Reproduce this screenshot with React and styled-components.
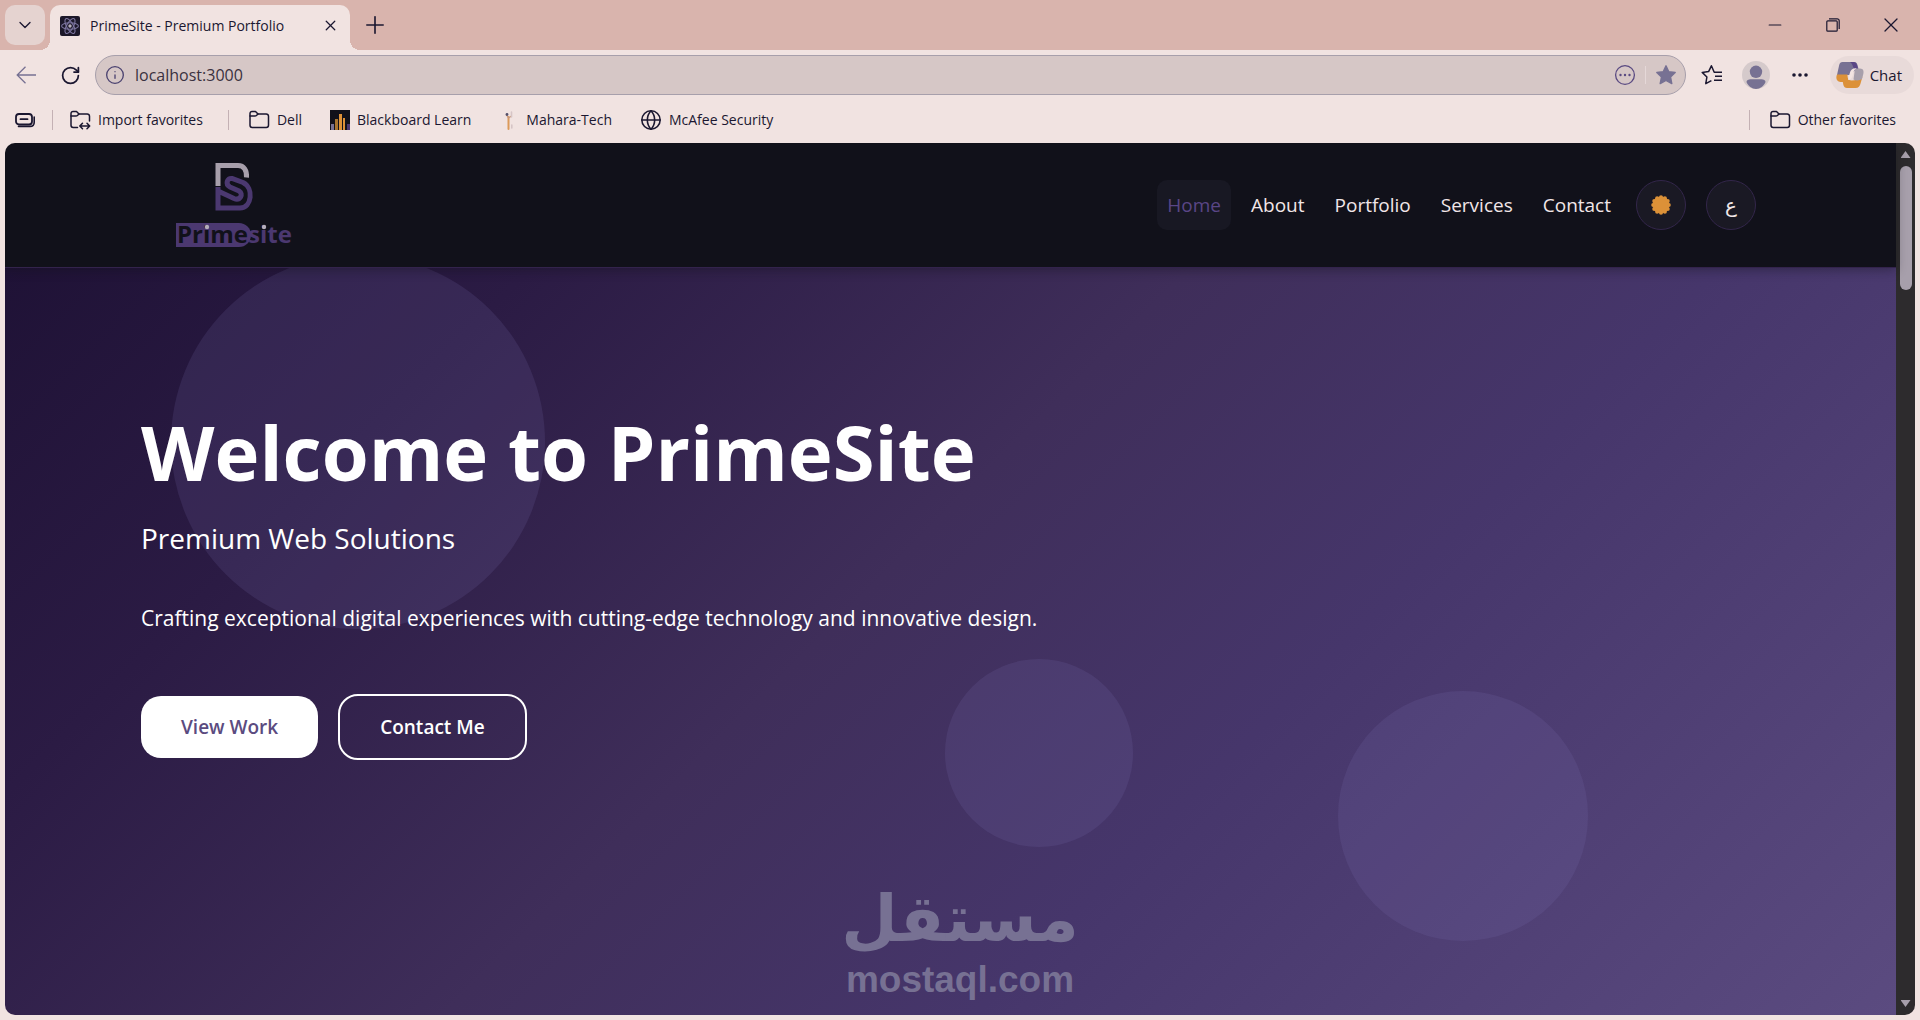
import { useState } from "react";
import styled, { createGlobalStyle } from "styled-components";
import {
  ArrowLeft,
  ChevronDown,
  Globe,
  Info,
  Minus,
  Plus,
  RotateCw,
  X,
} from "lucide-react";

const navItems = ["Home", "About", "Portfolio", "Services", "Contact"];

export default function App() {
  const [active, setActive] = useState("Home");

  return (
    <Window>
      <GlobalStyle />
      <TabStrip>
        <TabMenuButton aria-label="Tab actions">
          <ChevronDown size={20} strokeWidth={1.6} />
        </TabMenuButton>
        <Tab>
          <ReactIcon />
          <TabTitle>PrimeSite - Premium Portfolio</TabTitle>
          <IconButton aria-label="Close tab" $size={20}>
            <X size={17} strokeWidth={1.8} />
          </IconButton>
        </Tab>
        <IconButton aria-label="New tab" $size={50}>
          <Plus size={28} strokeWidth={1.4} />
        </IconButton>
        <WindowControls>
          <ControlButton aria-label="Minimize">
            <Minus size={20} strokeWidth={1.4} />
          </ControlButton>
          <ControlButton aria-label="Restore">
            <RestoreIcon />
          </ControlButton>
          <ControlButton aria-label="Close">
            <X size={24} strokeWidth={1.3} />
          </ControlButton>
        </WindowControls>
      </TabStrip>

      <Toolbar>
        <IconButton aria-label="Back" $size={45} $muted>
          <BackIcon />
        </IconButton>
        <IconButton aria-label="Refresh" $size={45}>
          <RotateCw size={21} strokeWidth={2} />
        </IconButton>
        <AddressBar>
          <Info size={20} strokeWidth={1.6} />
          <AddressInput aria-label="Address" defaultValue="localhost:3000" />
          <IconButton aria-label="Page options" $size={24}>
            <MoreCircleIcon />
          </IconButton>
          <AddressDivider />
          <IconButton aria-label="Remove from favorites" $size={24}>
            <StarIcon />
          </IconButton>
        </AddressBar>
        <ToolbarActions>
          <IconButton aria-label="Favorites" $size={24}>
            <StarListIcon />
          </IconButton>
          <IconButton aria-label="Profile" $size={28}>
            <AvatarIcon />
          </IconButton>
          <IconButton aria-label="Settings and more" $size={24}>
            <DotsIcon />
          </IconButton>
          <ChatButton>
            <CopilotIcon />
            Chat
          </ChatButton>
        </ToolbarActions>
      </Toolbar>

      <FavoritesBar>
        <IconButton aria-label="Workspaces" $size={20}>
          <WorkspacesIcon />
        </IconButton>
        <Divider />
        <Favorite href="#import">
          <FolderIcon arrows />
          Import favorites
        </Favorite>
        <FavoriteList>
          <Divider />
          <Favorite href="#dell">
            <FolderIcon />
            Dell
          </Favorite>
        </FavoriteList>
        <FavoriteLinks>
          <Favorite href="#blackboard">
            <BlackboardIcon />
            Blackboard Learn
          </Favorite>
          <Favorite href="#mahara">
            <MaharaIcon />
            Mahara-Tech
          </Favorite>
          <Favorite href="#mcafee">
            <Globe size={22} strokeWidth={1.7} />
            McAfee Security
          </Favorite>
        </FavoriteLinks>
        <OtherFavorites>
          <Divider />
          <Favorite href="#other">
            <FolderIcon />
            Other favorites
          </Favorite>
        </OtherFavorites>
      </FavoritesBar>

      <Viewport>
        <Page>
          <Header>
            <LogoLink href="#home" aria-label="Primesite">
              <Logo />
            </LogoLink>
            <Nav>
              <NavList>
                {navItems.map((item) => (
                  <NavLink
                    key={item}
                    href={`#${item.toLowerCase()}`}
                    $active={item === active}
                    onClick={() => setActive(item)}
                  >
                    {item}
                  </NavLink>
                ))}
              </NavList>
              <NavTools>
                <RoundButton aria-label="Toggle theme">
                  <SunIcon />
                </RoundButton>
                <RoundButton lang="ar">ع</RoundButton>
              </NavTools>
            </Nav>
          </Header>

          <Hero>
            <Bubble $size={374} $left="8.8%" $top={-13} />
            <Bubble $size={188} $left="49.7%" $top={391} />
            <Bubble $size={250} $left="70.5%" $top={423} />
            <HeroContent>
              <Title>Welcome to PrimeSite</Title>
              <Subtitle>Premium Web Solutions</Subtitle>
              <Description>
                Crafting exceptional digital experiences with cutting-edge
                technology and innovative design.
              </Description>
              <Actions>
                <PrimaryButton>View Work</PrimaryButton>
                <OutlineButton>Contact Me</OutlineButton>
              </Actions>
            </HeroContent>
          </Hero>
        </Page>
        <Scrollbar>
          <ScrollArrow />
          <ScrollThumb />
          <ScrollArrow $down />
        </Scrollbar>
        <Watermark>
          <WatermarkArabic lang="ar" dir="rtl">مستقل</WatermarkArabic>
          <WatermarkLatin>mostaql.com</WatermarkLatin>
        </Watermark>
      </Viewport>
    </Window>
  );
}

function ReactIcon() {
  return (
    <svg width="20" height="20" viewBox="0 0 20 20" fill="none">
      <rect width="20" height="20" rx="2" fill="#1c1829" />
      <g stroke="#7d76a0" strokeWidth="1.1">
        <ellipse cx="10" cy="10" rx="8.4" ry="3.3" />
        <ellipse cx="10" cy="10" rx="8.4" ry="3.3" transform="rotate(60 10 10)" />
        <ellipse cx="10" cy="10" rx="8.4" ry="3.3" transform="rotate(120 10 10)" />
      </g>
      <circle cx="10" cy="10" r="1.7" fill="#b5aebb" />
    </svg>
  );
}

function RestoreIcon() {
  return (
    <svg width="14" height="14" viewBox="0 0 14 14" fill="none" stroke="currentColor" strokeWidth="1.2">
      <rect x="0.8" y="2.8" width="10.4" height="10.4" rx="1" />
      <path d="M3 0.8h8.2a2 2 0 0 1 2 2V11" />
    </svg>
  );
}

function BackIcon() {
  return (
    <svg width="20" height="18" viewBox="0 0 20 18" fill="none" stroke="currentColor" strokeWidth="1.3">
      <path d="M9.500 0.800L1.200 9l8.300 8.200M1.200 9H20" />
    </svg>
  );
}

function MoreCircleIcon() {
  return (
    <svg width="22" height="22" viewBox="0 0 22 22" fill="none">
      <circle cx="11" cy="11" r="9.4" stroke="#5a4a82" strokeWidth="1.3" />
      <g fill="#5a4a82">
        <circle cx="6.5" cy="11" r="1.2" />
        <circle cx="11" cy="11" r="1.2" />
        <circle cx="15.5" cy="11" r="1.2" />
      </g>
    </svg>
  );
}

function StarIcon() {
  return (
    <svg width="22" height="22" viewBox="0 0 22 22" fill="#777193" stroke="#777193" strokeWidth="1.4" strokeLinejoin="round">
      <path d="M11 1.8l2.8 5.9 6.4.8-4.7 4.4 1.3 6.7-5.8-3.1-5.8 3.1 1.3-6.7L1.8 8.5l6.400-.8z" />
    </svg>
  );
}

function StarListIcon() {
  return (
    <svg width="22" height="22" viewBox="0 0 22 22" fill="none" stroke="currentColor" strokeWidth="1.5" strokeLinejoin="round">
      <path d="M21 8.200h-7.800L10.400 1.800 7.600 7.600 1.200 8.400l4.700 4.600-1.100 6.700 5.600-3" />
      <path d="M14 12.200h7M13 16.200h8" />
    </svg>
  );
}

function AvatarIcon() {
  return (
    <svg width="28" height="28" viewBox="0 0 28 28">
      <circle cx="14" cy="14" r="14" fill="#d5cacb" />
      <circle cx="14" cy="10.8" r="6.2" fill="#777193" />
      <path d="M4.500 21c0-2 2-2.800 4-2.800h11c2 0 4 .8 4 2.800-1.600 4-5.400 7-9.500 7s-7.900-3-9.500-7z" fill="#777193" />
    </svg>
  );
}

function DotsIcon() {
  return (
    <svg width="18" height="6" viewBox="0 0 18 6" fill="currentColor">
      <circle cx="3" cy="3" r="1.8" />
      <circle cx="9" cy="3" r="1.8" />
      <circle cx="15" cy="3" r="1.8" />
    </svg>
  );
}

function CopilotIcon() {
  return (
    <svg width="28" height="28" viewBox="0 0 28 28">
      <path d="M6.500 1H18c2 0 3 1 3.500 3l1 4-4 2-5 4H1L3.200 4c.5-2 1.500-3 3.300-3z" fill="#777193" />
      <path d="M14 1h3.500c2 0 3 1 3.500 3l1.200 4.500c-3 .2-4.200-.5-5-2.500C16.400 4 16 2 14 1z" fill="#5a4686" />
      <path d="M1 13.500h10.500c0 3 .5 6 4 6 4 0 8-2 11-4l-1.800 6.500c-.7 3-2.200 5-5.200 5H11c-2 0-3-1-3.600-3L6.800 21H4.500c-4 0-5-4-3.500-7.500z" fill="#dc9138" />
      <path d="M19 7.500h5c3.500 0 4 3 3.300 5.500l-1.300 5c-2 1.500-6 2-8.500.5z" fill="#a79fab" />
      <path d="M20.500 7.200c-2.500 1.300-3 4-3.700 6.800-.7 3-2 4.700-4.800 5l1.800-7c.8-3 2.700-5 6.700-4.800z" fill="#f2e4e1" />
    </svg>
  );
}

function WorkspacesIcon() {
  return (
    <svg width="20" height="20" viewBox="0 0 20 20" fill="none" stroke="currentColor" strokeLinecap="round">
      <rect x="1" y="4" width="16" height="10.5" rx="3" strokeWidth="1.8" />
      <path d="M5.500 9.200h7" strokeWidth="1.8" />
      <path d="M3.500 16.400h11.500c2.600 0 4.200-1.600 4.200-4.200V7" strokeWidth="1.6" />
    </svg>
  );
}

function FolderIcon({ arrows }) {
  return (
    <svg width="21" height="20" viewBox="0 0 21 20" fill="none" stroke="currentColor" strokeWidth="1.5" strokeLinejoin="round" strokeLinecap="round">
      <path
        d={
          arrows
            ? "M7.500 17.500H3.200A2.200 2.200 0 0 1 1 15.300V3.500A2 2 0 0 1 3 1.500h3.500L9 4h8.300a2.200 2.200 0 0 1 2.200 2.200V11"
            : "M1 15.300V3.500A2 2 0 0 1 3 1.500h3.500L9 4h8.300a2.200 2.200 0 0 1 2.200 2.200v9.100a2.200 2.200 0 0 1-2.200 2.200H3.200A2.200 2.200 0 0 1 1 15.300z"
        }
      />
      <path d="M1 6h4.800c.8 0 1.400-.3 1.900-.8L9 4" />
      {arrows && <path d="M10 16h9.500M12.500 13.200L9.800 16l2.700 2.800M17 13.200l2.700 2.800-2.700 2.800" />}
    </svg>
  );
}

function BlackboardIcon() {
  return (
    <svg width="20" height="20" viewBox="0 0 20 20">
      <rect width="20" height="20" fill="#11111a" />
      <rect x="1" y="14" width="3" height="6" fill="#777193" />
      <rect x="5" y="9" width="3" height="11" fill="#a8742f" />
      <rect x="9" y="4" width="3" height="16" fill="#dc9138" />
      <rect x="13" y="8" width="2" height="12" fill="#dc9138" />
      <rect x="17" y="14" width="3" height="6" fill="#4a386f" />
    </svg>
  );
}

function MaharaIcon() {
  return (
    <svg width="20" height="20" viewBox="0 0 20 20" fill="none" strokeLinecap="round">
      <path d="M9.500 7v12" stroke="#dc9a5a" strokeWidth="2" />
      <path d="M7.500 5l2 3 3-2" stroke="#c8977c" strokeWidth="1.2" />
      <circle cx="8" cy="4.5" r="1.4" fill="#55506a" />
      <path d="M12.500 2v5M12.800 15v3" stroke="#d6c5c6" strokeWidth="1.6" />
    </svg>
  );
}

function SunIcon() {
  const rays = Array.from({ length: 12 }, (_, i) => (i * Math.PI) / 6);
  return (
    <svg width="20" height="20" viewBox="0 0 20 20" fill="#dc9138">
      <circle cx="10" cy="10" r="8.4" />
      {rays.map((a) => (
        <circle key={a} cx={10 + 7.8 * Math.cos(a)} cy={10 + 7.8 * Math.sin(a)} r="2" />
      ))}
    </svg>
  );
}

function Logo() {
  return (
    <svg width="120" height="92" viewBox="0 -3 120 92" fill="none">
      <g strokeWidth="5">
        <path d="M43 24V3.500h20c6 0 9 5 8.500 12" stroke="#a79fab" />
        <path
          d="M43 25v21h22c12 0 14-20 3-25.500L57 16.500c-5-1-7 6-2 8.500l9 4c5 3 1 10-5 7.500L43 29"
          stroke="#4b3870"
          strokeLinejoin="miter"
        />
      </g>
      <path d="M1 61h63a12 12 0 0 1 0 24H1z" fill="#4b3870" />
      <LogoText x="2" y="81">
        <tspan fill="#11111a">Prime</tspan>
        <tspan fill="#4b3870">site</tspan>
      </LogoText>
      <circle cx="32" cy="65" r="2.2" fill="#b5aebb" />
      <circle cx="89" cy="65" r="2.2" fill="#b5aebb" />
    </svg>
  );
}

const GlobalStyle = createGlobalStyle`
  * {
    box-sizing: border-box;
  }
  body {
    margin: 0;
    font-family: "Open Sans", "Noto Sans", sans-serif;
    background: #f1e3e1;
    color: #1b1730;
  }
  button, input {
    font: inherit;
    color: inherit;
    border: none;
    background: none;
    padding: 0;
  }
  button {
    cursor: pointer;
  }
  a {
    color: inherit;
    text-decoration: none;
  }
  h1, p {
    margin: 0;
  }
  svg {
    flex-shrink: 0;
  }
`;

const Window = styled.div`
  display: flex;
  flex-direction: column;
  min-height: 100vh;
  padding-bottom: 5px;
`;

const TabStrip = styled.div`
  display: flex;
  align-items: center;
  height: 50px;
  padding-left: 5px;
  background: #d9b4ad;
`;

const TabMenuButton = styled.button`
  display: flex;
  align-items: center;
  justify-content: center;
  width: 40px;
  height: 40px;
  border-radius: 10px;
  background: #e5d3d0;
`;

const Tab = styled.div`
  position: relative;
  display: flex;
  align-items: center;
  align-self: flex-end;
  gap: 10px;
  width: 300px;
  height: 45px;
  margin-left: 5px;
  padding: 0 10px 4px;
  border-radius: 10px 10px 0 0;
  background: #f1e3e1;

  &::before,
  &::after {
    content: "";
    position: absolute;
    bottom: 0;
    width: 10px;
    height: 10px;
  }
  &::before {
    left: -10px;
    background: radial-gradient(circle at 0 0, transparent 10px, #f1e3e1 10px);
  }
  &::after {
    right: -10px;
    background: radial-gradient(circle at 100% 0, transparent 10px, #f1e3e1 10px);
  }
`;

const TabTitle = styled.span`
  flex: 1;
  font-size: 14px;
  white-space: nowrap;
`;

const IconButton = styled.button`
  display: flex;
  align-items: center;
  justify-content: center;
  flex-shrink: 0;
  width: ${({ $size }) => $size}px;
  height: ${({ $size }) => $size}px;
  color: ${({ $muted }) => ($muted ? "#777193" : "#1b1730")};
`;

const WindowControls = styled.div`
  display: flex;
  align-self: stretch;
  margin-left: auto;
`;

const ControlButton = styled.button`
  display: flex;
  align-items: center;
  justify-content: center;
  width: 58px;
`;

const Toolbar = styled.div`
  display: flex;
  align-items: center;
  height: 50px;
  padding: 0 6px 0 3px;
`;

const AddressBar = styled.div`
  display: flex;
  align-items: center;
  flex: 1;
  height: 40px;
  margin-left: 2px;
  padding: 0 7px 0 9px;
  border: 1px solid #a79fab;
  border-radius: 20px;
  background: #d6c7c6;
  color: #4b4270;
`;

const AddressInput = styled.input`
  flex: 1;
  min-width: 0;
  margin-left: 10px;
  font-size: 16px;
  color: #3a3140;
  outline: none;
`;

const AddressDivider = styled.span`
  width: 1px;
  height: 18px;
  margin: 0 8px;
  background: #e5d8d8;
`;

const ToolbarActions = styled.div`
  display: flex;
  align-items: center;
  gap: 18px;
  margin-left: 14px;
`;

const ChatButton = styled.button`
  display: flex;
  align-items: center;
  gap: 6px;
  height: 38px;
  padding: 0 12px 0 6px;
  border-radius: 19px;
  background: #e8dad9;
  font-size: 15px;
`;

const FavoritesBar = styled.div`
  display: flex;
  align-items: center;
  gap: 17px;
  height: 43px;
  padding: 0 24px 4px 15px;
`;

const Divider = styled.span`
  width: 1px;
  height: 20px;
  background: #c4b1b4;
`;

const FavoriteList = styled.div`
  display: flex;
  align-items: center;
  gap: 20px;
  margin-left: 8px;
`;

const FavoriteLinks = styled.div`
  display: flex;
  gap: 28px;
  margin-left: 11px;
`;

const Favorite = styled.a`
  display: flex;
  align-items: center;
  gap: 7px;
  font-size: 14px;
  white-space: nowrap;
`;

const OtherFavorites = styled.div`
  display: flex;
  align-items: center;
  gap: 20px;
  margin-left: auto;
`;

const Viewport = styled.div`
  position: relative;
  display: flex;
  flex: 1;
  margin: 0 5px;
  border-radius: 10px;
  overflow: hidden;
`;

const Page = styled.main`
  display: flex;
  flex-direction: column;
  flex: 1;
`;

const Header = styled.header`
  position: relative;
  z-index: 1;
  display: flex;
  align-items: center;
  justify-content: space-between;
  height: 125px;
  padding: 0 140px;
  border-bottom: 1px solid #33234c;
  background: #11111a;
  box-shadow: 0 2px 10px rgba(17, 17, 26, 0.4);
`;

const LogoLink = styled.a`
  display: flex;
  justify-content: center;
  width: 180px;
`;

const LogoText = styled.text`
  font-size: 24px;
  font-weight: 700;
`;

const Nav = styled.nav`
  display: flex;
  align-items: center;
  gap: 15px;
`;

const NavList = styled.div`
  display: flex;
  gap: 10px;
`;

const NavLink = styled.a`
  padding: 12px 10px;
  border-radius: 10px;
  background: ${({ $active }) => ($active ? "#181823" : "transparent")};
  color: ${({ $active }) => ($active ? "#5a4686" : "#f1e6e8")};
  font-size: 19px;
  line-height: 26px;
  font-weight: ${({ $active }) => ($active ? 400 : 500)};
`;

const NavTools = styled.div`
  display: flex;
  gap: 20px;
`;

const RoundButton = styled.button`
  display: flex;
  align-items: center;
  justify-content: center;
  width: 50px;
  height: 50px;
  border: 1px solid #33264b;
  border-radius: 50%;
  background: #1a1924;
  color: #f1e6e8;
  font-family: "DejaVu Sans", sans-serif;
  font-size: 20px;
`;

const Hero = styled.section`
  position: relative;
  flex: 1;
  padding: 136px 136px 0;
  overflow: hidden;
  background: linear-gradient(
    135deg,
    #1f1236 0%,
    #2b1b44 20%,
    #3f2e5a 45%,
    #46366b 65%,
    #5b4b80 100%
  );
`;

const Bubble = styled.span`
  position: absolute;
  top: ${({ $top }) => $top}px;
  left: ${({ $left }) => $left};
  width: ${({ $size }) => $size}px;
  height: ${({ $size }) => $size}px;
  border-radius: 50%;
  background: rgba(124, 110, 180, 0.17);
`;

const HeroContent = styled.div`
  position: relative;
  color: #ffffff;
`;

const Title = styled.h1`
  margin-bottom: 18px;
  font-size: 76px;
  font-weight: 700;
  line-height: 96px;
`;

const Subtitle = styled.p`
  margin-bottom: 42px;
  font-size: 28px;
  line-height: 40px;
`;

const Description = styled.p`
  margin-bottom: 58px;
  font-size: 21px;
  line-height: 36px;
`;

const Actions = styled.div`
  display: flex;
  align-items: center;
  gap: 20px;
`;

const PrimaryButton = styled.button`
  padding: 18px 40px;
  border-radius: 20px;
  background: #ffffff;
  color: #5b4b80;
  font-size: 19px;
  font-weight: 600;
  line-height: 26px;
`;

const OutlineButton = styled(PrimaryButton)`
  border: 2px solid #ffffff;
  background: transparent;
  color: #ffffff;
`;

const Scrollbar = styled.div`
  display: flex;
  flex-direction: column;
  align-items: center;
  gap: 8px;
  width: 19px;
  padding: 8px 0;
  background: #2d2b2d;
`;

const ScrollArrow = styled.span`
  width: 10px;
  height: 7px;
  margin-top: ${({ $down }) => ($down ? "auto" : 0)};
  background: #a79fab;
  clip-path: ${({ $down }) =>
    $down ? "polygon(0 0, 100% 0, 50% 100%)" : "polygon(50% 0, 100% 100%, 0 100%)"};
`;

const ScrollThumb = styled.span`
  width: 12px;
  height: 124px;
  border-radius: 6px;
  background: #a79fab;
`;

// site watermark that lies over the lower part of the page
const Watermark = styled.div`
  position: absolute;
  left: 0;
  right: 0;
  bottom: 14px;
  display: flex;
  flex-direction: column;
  align-items: center;
  color: #777193;
  font-weight: 700;
  pointer-events: none;
`;

const WatermarkArabic = styled.span`
  font-family: "DejaVu Sans", sans-serif;
  font-size: 65px;
  line-height: 78px;
`;

const WatermarkLatin = styled.span`
  font-family: "Liberation Sans", sans-serif;
  font-size: 37px;
  line-height: 43px;
`;
